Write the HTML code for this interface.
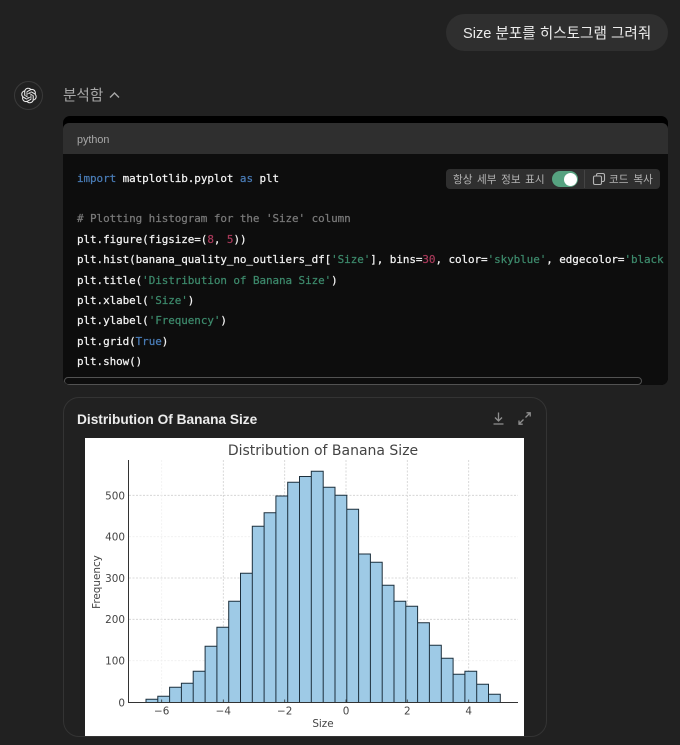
<!DOCTYPE html>
<html lang="ko"><head><meta charset="utf-8"><style>
*{box-sizing:border-box}
html,body{margin:0;padding:0;width:680px;height:745px;overflow:hidden;background:#212121}
body{position:relative;font-family:"Liberation Sans","Noto Sans CJK KR",sans-serif}
.a{position:absolute;white-space:nowrap}
.code{position:absolute;left:77px;top:168.6px;font:10.92px/20.4px "DejaVu Sans Mono","Liberation Mono",monospace;color:#f4f4f4;white-space:pre;letter-spacing:-.05px;-webkit-text-stroke:.22px currentColor}
.k{color:#4a7db8}.c{color:#7a7a7a}.s{color:#3d8a6c}.n{color:#a83a5a}
</style></head><body>
<div class="a" style="left:446px;top:14px;width:222px;height:37px;background:#2f2f2f;border-radius:18.5px"></div>
<div class="a" style="left:463px;top:23.6px;font-size:14.6px;line-height:20px;color:#ececec">Size 분포를 히스토그램 그려줘</div>

<div class="a" style="left:14px;top:81px;width:29px;height:29px;border:1px solid #3a3a3a;border-radius:50%"></div>
<svg class="a" style="left:21px;top:87px" width="16" height="17" viewBox="0 0 41 41"><path fill="#ececec" d="M37.5324 16.8707C37.9808 15.5241 38.1363 14.0974 37.9886 12.6859C37.8409 11.2744 37.3934 9.91076 36.676 8.68622C35.6126 6.83404 33.9882 5.3676 32.0373 4.4985C30.0864 3.62941 27.9098 3.40259 25.8215 3.85078C24.8796 2.7893 23.7219 1.94125 22.4257 1.36341C21.1295 0.785575 19.7249 0.491269 18.3058 0.500197C16.1708 0.495044 14.0893 1.16803 12.3614 2.42214C10.6335 3.67624 9.34853 5.44666 8.6917 7.47815C7.30085 7.76286 5.98686 8.3414 4.8377 9.17505C3.68854 10.0087 2.73073 11.0782 2.02839 12.312C0.956464 14.1591 0.498905 16.2988 0.721698 18.4228C0.944492 20.5467 1.83612 22.5449 3.268 24.1293C2.81966 25.4759 2.66413 26.9026 2.81182 28.3141C2.95951 29.7256 3.40701 31.0892 4.12437 32.3138C5.18791 34.1659 6.8123 35.6322 8.76321 36.5013C10.7141 37.3704 12.8907 37.5973 14.9789 37.1492C15.9208 38.2107 17.0786 39.0587 18.3747 39.6366C19.6709 40.2144 21.0755 40.5087 22.4946 40.4998C24.6307 40.5054 26.7133 39.8321 28.4418 38.5772C30.1704 37.3223 31.4556 35.5506 32.1119 33.5179C33.5027 33.2332 34.8167 32.6547 35.9659 31.821C37.115 30.9874 38.0728 29.9178 38.7752 28.684C39.8458 26.8371 40.3023 24.6979 40.0789 22.5748C39.8556 20.4517 38.9639 18.4544 37.5324 16.8707ZM22.4978 37.8849C20.7443 37.8874 19.0459 37.2733 17.6994 36.1501C17.7601 36.117 17.8666 36.0586 17.936 36.0161L25.9004 31.4156C26.1003 31.3019 26.2663 31.137 26.3813 30.9378C26.4964 30.7386 26.5563 30.5124 26.5549 30.2825V19.0542L29.9213 20.998C29.9389 21.0068 29.9541 21.0198 29.9656 21.0359C29.977 21.052 29.9842 21.0707 29.9867 21.0902V30.3889C29.9842 32.375 29.1946 34.2791 27.7909 35.6841C26.3872 37.0892 24.4838 37.8806 22.4978 37.8849ZM6.39227 31.0064C5.51397 29.4888 5.19742 27.7107 5.49804 25.9832C5.55718 26.0187 5.66048 26.0818 5.73461 26.1244L13.699 30.7248C13.8975 30.8408 14.1233 30.902 14.3532 30.902C14.583 30.902 14.8088 30.8408 15.0073 30.7248L24.731 25.1103V28.9979C24.7321 29.0177 24.7283 29.0376 24.7199 29.0556C24.7115 29.0736 24.6988 29.0893 24.6829 29.1012L16.6317 33.7497C14.9096 34.7416 12.8643 35.0097 10.9447 34.4954C9.02506 33.9811 7.38785 32.7263 6.39227 31.0064ZM4.29707 13.6194C5.17156 12.0998 6.55279 10.9364 8.19885 10.3327C8.19885 10.4013 8.19491 10.5228 8.19491 10.6071V19.808C8.19351 20.0378 8.25334 20.2638 8.36823 20.4629C8.48312 20.6619 8.64893 20.8267 8.84863 20.9404L18.5723 26.5542L15.206 28.4979C15.1894 28.5089 15.1703 28.5155 15.1505 28.5173C15.1307 28.5191 15.1107 28.516 15.0924 28.5082L7.04046 23.8557C5.32135 22.8601 4.06716 21.2235 3.55289 19.3046C3.03862 17.3858 3.30624 15.3413 4.29707 13.6194ZM31.955 20.0556L22.2312 14.4411L25.5976 12.4981C25.6142 12.4872 25.6333 12.4805 25.6531 12.4787C25.6729 12.4769 25.6928 12.4801 25.7111 12.4879L33.7631 17.1364C34.9967 17.849 36.0017 18.8982 36.6606 20.1613C37.3194 21.4244 37.6047 22.849 37.4832 24.2684C37.3617 25.6878 36.8382 27.0432 35.9743 28.1759C35.1103 29.3086 33.9415 30.1717 32.6047 30.6641C32.6047 30.5947 32.6047 30.4733 32.6047 30.3889V21.188C32.6066 20.9586 32.5474 20.7328 32.4332 20.5338C32.319 20.3348 32.154 20.1698 31.955 20.0556ZM35.3055 15.0128C35.2464 14.9765 35.1431 14.9142 35.069 14.8717L27.1045 10.2712C26.906 10.1554 26.6803 10.0943 26.4504 10.0943C26.2206 10.0943 25.9948 10.1554 25.7963 10.2712L16.0726 15.8858V11.9982C16.0715 11.9783 16.0753 11.9585 16.0837 11.9405C16.0921 11.9225 16.1048 11.9068 16.1207 11.8949L24.1719 7.25025C25.4053 6.53903 26.8158 6.19376 28.2383 6.25482C29.6608 6.31589 31.0364 6.78077 32.2044 7.59508C33.3723 8.40939 34.2842 9.53945 34.8334 10.8531C35.3826 12.1667 35.5464 13.6095 35.3055 15.0128ZM14.2424 21.9419L10.8752 19.9981C10.8576 19.9893 10.8423 19.9763 10.8309 19.9602C10.8195 19.9441 10.8122 19.9254 10.8098 19.9058V10.6071C10.8107 9.18295 11.2173 7.78848 11.9819 6.58696C12.7466 5.38544 13.8377 4.42659 15.1275 3.82264C16.4173 3.21869 17.8524 2.99464 19.2649 3.1767C20.6775 3.35876 22.0089 3.93941 23.1034 4.85067C23.0427 4.88379 22.937 4.94215 22.8668 4.98473L14.9024 9.58517C14.7025 9.69878 14.5366 9.86356 14.4215 10.0626C14.3065 10.2616 14.2466 10.4877 14.2479 10.7175L14.2424 21.9419ZM16.071 17.9991L20.4018 15.4978L24.7325 17.9975V22.9985L20.4018 25.4983L16.071 22.9985V17.9991Z"/></svg>
<div class="a" style="left:63px;top:86.2px;font-size:14.6px;line-height:20px;color:#a8a8a8">분석함</div>
<svg class="a" style="left:108px;top:90px" width="13" height="10" viewBox="0 0 13 10"><path d="M2 7.5L6.5 3L11 7.5" fill="none" stroke="#a8a8a8" stroke-width="1.4"/></svg>

<!-- code block -->
<div class="a" style="left:63px;top:116px;width:605px;height:269px;background:#000;border-radius:7px;overflow:hidden">
  <div style="position:absolute;left:0;top:7px;width:605px;height:31px;background:#2f2f2f;border-radius:6px 6px 0 0"></div>
  <div style="position:absolute;left:0;top:38px;width:605px;height:231px;background:#0d0d0d"></div>
  <div style="position:absolute;left:1px;top:261px;width:578px;height:8px;border:1px solid #525252;border-radius:4px;background:#0d0d0d"></div>
</div>
<div class="a" style="left:77px;top:132.5px;font-size:10.8px;line-height:15px;color:#a8a8a8">python</div>
<div class="code"><span class="k">import</span> matplotlib.pyplot <span class="k">as</span> plt

<span class="c"># Plotting histogram for the 'Size' column</span>
plt.figure(figsize=(<span class="n">8</span>, <span class="n">5</span>))
plt.hist(banana_quality_no_outliers_df[<span class="s">'Size'</span>], bins=<span class="n">30</span>, color=<span class="s">'skyblue'</span>, edgecolor=<span class="s">'black</span>
plt.title(<span class="s">'Distribution of Banana Size'</span>)
plt.xlabel(<span class="s">'Size'</span>)
plt.ylabel(<span class="s">'Frequency'</span>)
plt.grid(<span class="k">True</span>)
plt.show()</div>

<div class="a" style="left:446px;top:169px;width:214px;height:20px;background:#2f2f2f;border-radius:4px"></div>
<div class="a" style="left:453px;top:171.5px;font-size:10.6px;line-height:16px;color:#b4b4b4;word-spacing:1.6px">항상 세부 정보 표시</div>
<div class="a" style="left:552px;top:171px;width:26px;height:16px;background:#56a280;border-radius:8px"></div>
<div class="a" style="left:564px;top:172.5px;width:13px;height:13px;background:#fff;border-radius:50%"></div>
<div class="a" style="left:584px;top:170px;width:1px;height:18px;background:#444"></div>
<svg class="a" style="left:592px;top:171.5px" width="14" height="14" viewBox="0 0 14 14"><rect x="1.5" y="4" width="8" height="8.5" rx="1.5" fill="none" stroke="#b4b4b4" stroke-width="1.1"/><path d="M4.5 3.8V3a1.5 1.5 0 0 1 1.5-1.5h5A1.5 1.5 0 0 1 12.5 3v5a1.5 1.5 0 0 1-1.5 1.5h-1" fill="none" stroke="#b4b4b4" stroke-width="1.1"/></svg>
<div class="a" style="left:609px;top:171.5px;font-size:10.6px;line-height:16px;color:#b4b4b4;word-spacing:2px">코드 복사</div>

<!-- card -->
<div class="a" style="left:63px;top:397px;width:484px;height:340px;border:1px solid #343434;border-radius:16px;background:#212121"></div>
<div class="a" style="left:77px;top:409.6px;font-size:13.7px;line-height:20px;font-weight:700;color:#ececec">Distribution Of Banana Size</div>
<svg class="a" style="left:491px;top:411px" width="15" height="15" viewBox="0 0 15 15"><path d="M7.5 1.5V9.5M4 6.5L7.5 10L11 6.5M2.5 13H12.5" fill="none" stroke="#8f8f8f" stroke-width="1.3"/></svg>
<svg class="a" style="left:517px;top:411px" width="15" height="15" viewBox="0 0 15 15"><path d="M8.5 6.5L13 2M9.5 1.8H13.2V5.5M6.5 8.5L2 13M2 9.5V13.2H5.7" fill="none" stroke="#8f8f8f" stroke-width="1.3"/></svg>

<svg class="a" style="left:85px;top:438px" width="439" height="298" viewBox="85 438 439 298" font-family="DejaVu Sans, sans-serif">
<rect x="85" y="438" width="439" height="298" fill="#fff"/>
<g stroke="#cfcfcf" stroke-width=".8" stroke-dasharray="2 1.5">
<path d="M129 495.3H518M129 578H518M129 619.3H518"/>
<path d="M223.3 460V702M284.7 460V702M346 460V702M407.3 460V702M468.7 460V702"/>
</g>
<g stroke="#efefef" stroke-width=".8" stroke-dasharray="2 1.5"><path d="M129 536.7H518M129 660.7H518M161.7 460V702"/></g>
<path id="b" fill="#9ecae6" stroke="#1c2f3c" stroke-width="1" d="M146 702.5V699.3H157.8V702.5ZM157.8 702.5V696.3H169.6V702.5ZM169.6 702.5V687.3H181.4V702.5ZM181.4 702.5V683.3H193.2V702.5ZM193.2 702.5V671.3H205.1V702.5ZM205.1 702.5V646.3H216.9V702.5ZM216.9 702.5V627.3H228.7V702.5ZM228.7 702.5V601.3H240.5V702.5ZM240.5 702.5V573.3H252.3V702.5ZM252.3 702.5V526.3H264.1V702.5ZM264.1 702.5V512.7H275.9V702.5ZM275.9 702.5V496H287.7V702.5ZM287.7 702.5V482.3H299.5V702.5ZM299.5 702.5V476.5H311.3V702.5ZM311.3 702.5V471.3H323.2V702.5ZM323.2 702.5V487.3H335V702.5ZM335 702.5V495.3H346.8V702.5ZM346.8 702.5V509.3H358.6V702.5ZM358.6 702.5V554H370.4V702.5ZM370.4 702.5V562.3H382.2V702.5ZM382.2 702.5V585.3H394V702.5ZM394 702.5V601.3H405.8V702.5ZM405.8 702.5V606.3H417.6V702.5ZM417.6 702.5V622.7H429.4V702.5ZM429.4 702.5V645.3H441.3V702.5ZM441.3 702.5V658.3H453.1V702.5ZM453.1 702.5V674.3H464.9V702.5ZM464.9 702.5V671.3H476.7V702.5ZM476.7 702.5V684.3H488.5V702.5ZM488.5 702.5V694.3H500.3V702.5Z"/>
<path d="M128.5 460V702.5H518" fill="none" stroke="#333" stroke-width="1"/>
<path d="M161.7 702.5v-3M223.3 702.5v-3M284.7 702.5v-3M346 702.5v-3M407.3 702.5v-3M468.7 702.5v-3" stroke="#333" stroke-width=".8"/>
<text x="323" y="455" text-anchor="middle" font-size="14" fill="#444">Distribution of Banana Size</text>
<g font-size="10.4" fill="#444" text-anchor="middle">
<text x="161.7" y="714.5">−6</text><text x="223.3" y="714.5">−4</text><text x="284.7" y="714.5">−2</text><text x="346" y="714.5">0</text><text x="407.3" y="714.5">2</text><text x="468.7" y="714.5">4</text>
<text x="323" y="727">Size</text>
</g>
<g font-size="10.4" fill="#444" text-anchor="end">
<text x="125" y="706.5">0</text><text x="125" y="664.5">100</text><text x="125" y="623">200</text><text x="125" y="582">300</text><text x="125" y="540.5">400</text><text x="125" y="499.5">500</text>
</g>
<text transform="translate(100,582) rotate(-90)" text-anchor="middle" font-size="10.4" fill="#444">Frequency</text>
</svg>
</body></html>
